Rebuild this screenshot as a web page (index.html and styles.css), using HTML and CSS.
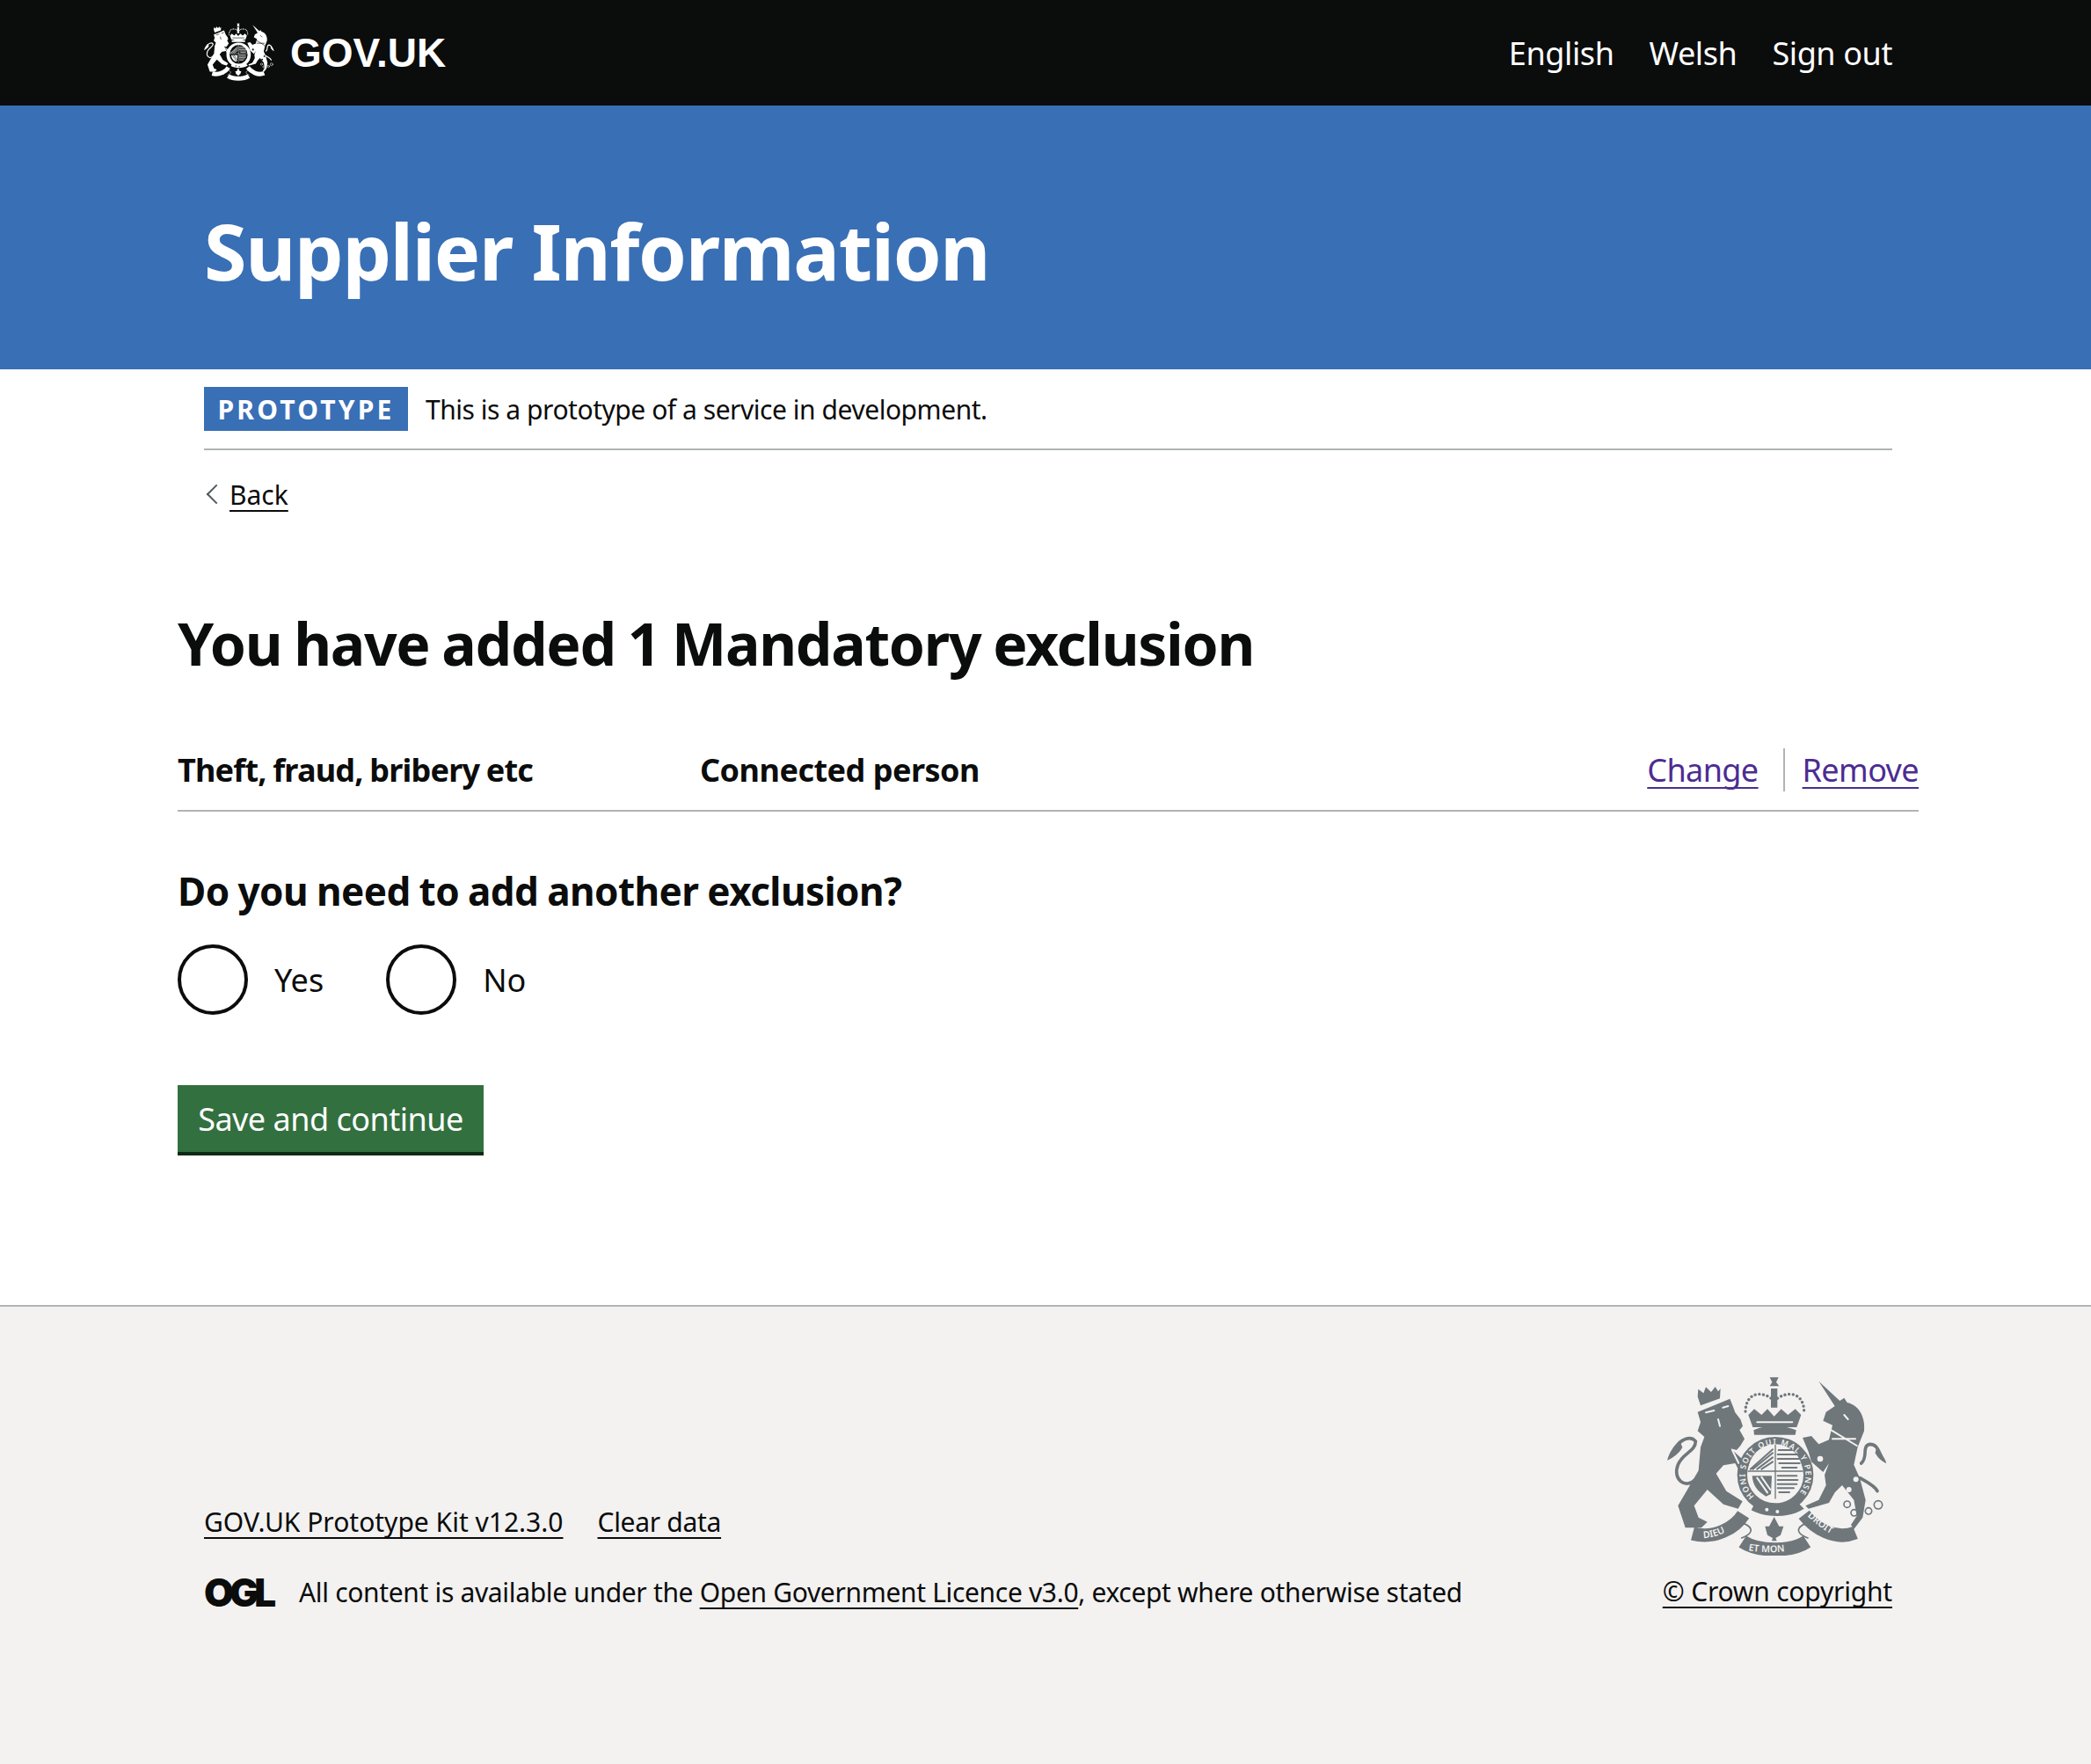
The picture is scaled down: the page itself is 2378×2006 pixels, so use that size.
FILE: index.html
```html
<!DOCTYPE html>
<html lang="en">
    <head>
        <meta charset="UTF-8">
        <meta name="viewport" content="width=device-width, initial-scale=1.0">
        <title>Supplier Information</title>
        <link rel="stylesheet" href="styles.css">
    </head>
<body>
    <svg class="defs" aria-hidden="true">
        <defs>
            <g id="arms">
                <!-- lion -->
                <path d="M212 170 L262 150 L322 125 L332 150 L340 172 L358 195 L366 218 L355 232 L372 262 L358 285 L345 300 L325 295 L385 350 L372 405 L340 345 L300 352 L275 380 L310 440 L365 475 L350 500 L300 485 L245 435 L200 490 L215 530 L245 545 L225 565 L170 565 L145 490 L180 430 L215 370 L222 290 L235 255 L212 235 L222 205 Z"/>
                <path class="arm-line" d="M205 400 C170 435 125 400 145 350 C160 310 205 305 205 270 C190 250 150 260 135 300"/>
                <path d="M150 268 C130 285 115 310 108 335 C130 325 150 310 160 290 Z"/>
                <path class="arm-gap" d="M240 172 L268 165 M298 155 L316 150 M282 195 L288 218 M330 300 L352 345"/>
                <path d="M212 118 L214 92 L232 106 L240 85 L258 102 L272 84 L282 100 L290 90 L288 124 L222 148 Z"/>
                <!-- unicorn -->
                <path d="M625 65 L697 132 L712 122 L722 138 C760 145 785 185 780 235 L758 290 L745 350 L765 395 L785 470 L775 530 L745 570 L735 555 L755 525 L745 470 L705 420 L680 445 L660 480 L590 500 L580 490 L625 470 L650 420 L645 385 L660 345 L640 375 L600 340 L590 305 L570 258 L600 252 L625 280 L660 265 L672 215 L640 200 L650 170 L680 150 Z"/>
                <path class="arm-line" d="M770 345 C795 325 770 285 800 280 C825 280 830 305 838 322"/>
                <path d="M822 290 C835 305 850 325 856 345 C840 340 825 325 818 310 Z"/>
                <path class="arm-line" d="M765 395 C790 410 815 420 825 440"/>
                <path class="arm-gap" d="M668 232 L755 285 M672 262 L750 262 M712 180 L725 195"/>
                <circle class="arm-dot" cx="728" cy="435" r="9"/>
                <circle class="arm-dot" cx="752" cy="400" r="9"/>
                <circle class="arm-dot" cx="630" cy="330" r="10"/>
                <circle class="arm-ring" cx="722" cy="485" r="11"/>
                <circle class="arm-ring" cx="746" cy="514" r="11"/>
                <circle class="arm-ring" cx="795" cy="508" r="11"/>
                <circle class="arm-ring" cx="828" cy="487" r="14"/>
                <!-- crown -->
                <path d="M385 180 L405 160 L430 180 L450 160 L473 185 L497 160 L520 180 L545 160 L565 180 L550 222 L400 222 Z"/>
                <path class="arm-gap" d="M415 205 L535 205"/>
                <path d="M403 232 C450 212 500 212 548 232 L545 248 L405 248 Z"/>
                <path class="arm-fine" d="M473 132 C430 92 375 105 375 170 M473 132 C520 92 575 105 575 170"/>
                <path d="M458 52 L488 52 L480 68 L490 82 L458 82 L466 68 Z M462 90 L484 90 L484 155 L462 155 Z"/>
                <!-- shield -->
                <circle class="arm-band" cx="477" cy="385" r="113"/>
                <circle class="arm-face" cx="477" cy="372" r="92"/>
                <path class="arm-cross" d="M385 372 L570 372 M477 280 L477 465"/>
                <path class="arm-hatch" d="M392 365 L468 298 M400 365 L468 310 M415 365 L468 325 M430 365 L468 340"/>
                <path class="arm-hatch" d="M488 300 L550 300 M485 315 L555 315 M485 330 L560 330 M490 345 L560 345 M500 360 L550 360"/>
                <path class="arm-hatch" d="M485 388 L550 388 M485 402 L553 402 M485 416 L550 416 M485 430 L540 430 M490 444 L525 444"/>
                <path d="M398 388 L465 388 L462 450 L445 458 C415 440 400 420 398 388 Z"/>
                <path class="arm-gap" d="M415 395 L450 445 M430 392 L460 435"/>
                <path d="M405 485 C440 510 510 515 555 480 L575 500 C520 535 440 530 395 505 Z"/>
                <circle class="arm-dot" cx="448" cy="503" r="6"/>
                <circle class="arm-dot" cx="484" cy="510" r="6"/>
                <!-- ribbon -->
                <path class="arm-ribbon" d="M195 585 C270 605 340 565 368 520"/>
                <path class="arm-ribbon" d="M365 612 C420 648 530 648 585 612"/>
                <path class="arm-ribbon" d="M575 520 C610 565 680 610 750 582"/>
                <path class="arm-curl" d="M350 545 C395 555 415 580 362 600 M600 545 C555 555 535 580 588 600"/>
                <path d="M473 528 L490 560 L505 560 L495 590 L478 600 L482 610 L465 610 L468 600 L450 590 L442 560 L456 560 Z"/>
            </g>
            <path id="arc-motto" d="M405 458 A103 103 0 1 1 553 454"/>
            <path id="rib-left" d="M232 600 C275 600 325 577 358 542"/>
            <path id="rib-mid" d="M385 642 C430 652 510 652 565 634"/>
            <path id="rib-right" d="M586 526 C620 556 665 592 718 608"/>
        </defs>
    </svg>

    <header class="top-bar">
        <div class="top-inner">
            <a class="logo" href="#"><svg class="logo-arms" viewBox="108 48 750 612"><use href="#arms"/></svg>GOV.UK</a>
            <nav class="top-nav">
                <a href="#">English</a>
                <a href="#">Welsh</a>
                <a href="#">Sign out</a>
            </nav>
        </div>
    </header>

    <div class="service-band">
        <div class="service-name">Supplier Information</div>
    </div>

    <div class="phase-banner">
        <strong class="phase-tag">PROTOTYPE</strong>
        <span class="phase-text">This is a prototype of a service in development.</span>
    </div>

    <a class="back-link" href="#">Back</a>

    <main class="main-wrap">
        <h1>You have added 1 Mandatory exclusion</h1>

        <div class="summary-row">
            <div class="summary-key">Theft, fraud, bribery etc</div>
            <div class="summary-value">Connected person</div>
            <div class="summary-actions">
                <a href="#">Change</a>
                <a href="#">Remove</a>
            </div>
        </div>

        <h2>Do you need to add another exclusion?</h2>

        <div class="radios">
            <label class="radio"><span class="radio-circle"></span>Yes</label>
            <label class="radio"><span class="radio-circle"></span>No</label>
        </div>

        <button class="save-button">Save and continue</button>
    </main>

    <footer class="footer">
        <div class="footer-inner">
            <div class="footer-left">
                <div class="footer-links">
                    <a href="#">GOV.UK Prototype Kit v12.3.0</a>
                    <a class="clear-link" href="#">Clear data</a>
                </div>
                <div class="licence">
                    <span class="ogl">OGL</span>
                    <span class="licence-text">All content is available under the <a href="#">Open Government Licence v3.0</a>, except where otherwise stated</span>
                </div>
            </div>
            <div class="footer-right">
                <svg class="footer-arms" viewBox="108 48 750 612">
                    <use href="#arms"/>
                    <text class="arm-text" textLength="470"><textPath href="#arc-motto">HONI SOIT QUI MAL Y PENSE</textPath></text>
                    <text class="arm-text ribbon-text"><textPath href="#rib-left">DIEU</textPath></text>
                    <text class="arm-text ribbon-text"><textPath href="#rib-mid">ET MON</textPath></text>
                    <text class="arm-text ribbon-text"><textPath href="#rib-right">DROIT</textPath></text>
                </svg>
                <a class="crown-link" href="#">© Crown copyright</a>
            </div>
        </div>
    </footer>
</body>
</html>
```

FILE: styles.css
```css
html, body {
    height: 100%;
}

body {
    font-family: 'Noto Sans', sans-serif;
    margin: 0;
    background-color: #fff;
    color: #0b0c0c;
    font-size: 30px;
    display: flex;
    flex-direction: column;
}

a {
    color: inherit;
    text-decoration-thickness: 2px;
    text-underline-offset: 6px;
    text-decoration-skip-ink: none;
}

h1, h2 {
    margin: 0;
}

.defs {
    position: absolute;
    width: 0;
    height: 0;
}

/* coat of arms parts */
.arm-line, .arm-fine, .arm-ring, .arm-hatch, .arm-gap, .arm-cross, .arm-curl {
    fill: none;
    stroke-linecap: round;
}

.arm-line {
    stroke: currentColor;
    stroke-width: 11px;
}

.arm-fine {
    stroke: currentColor;
    stroke-width: 10px;
    stroke-dasharray: 0.1 14;
}

.arm-hatch {
    stroke: currentColor;
    stroke-width: 6px;
}

.arm-cross {
    stroke: currentColor;
    stroke-width: 4px;
}

.arm-curl {
    stroke: currentColor;
    stroke-width: 5px;
}

.arm-ring {
    stroke: currentColor;
    stroke-width: 5px;
}

.arm-gap {
    stroke: var(--arm-bg);
    stroke-width: 6px;
}

.arm-dot {
    fill: var(--arm-bg);
}

.arm-band {
    fill: var(--arm-bg);
    stroke: currentColor;
    stroke-width: 34px;
}

.arm-face {
    fill: var(--arm-bg);
}

.arm-ribbon {
    fill: none;
    stroke: currentColor;
    stroke-width: 46px;
}

.arm-text {
    fill: var(--arm-bg);
    font-family: 'Noto Sans', sans-serif;
    font-size: 27px;
    font-weight: 600;
}

.ribbon-text {
    font-size: 32px;
}

/* header */
.top-bar {
    background-color: #0b0c0c;
    color: #fff;
    height: 120px;
}

.top-inner {
    display: flex;
    justify-content: space-between;
    align-items: center;
    height: 120px;
    width: 1920px;
    margin-left: 232px;
}

.logo {
    display: flex;
    align-items: center;
    gap: 18px;
    color: #fff;
    text-decoration: none;
    font-family: 'Liberation Sans', sans-serif;
    font-weight: bold;
    font-size: 46px;
    letter-spacing: 0;
    fill: #fff;
    --arm-bg: #0b0c0c;
}

.logo-arms {
    width: 80px;
    height: 66px;
    margin-bottom: 2px;
}

.top-nav {
    display: flex;
    gap: 40px;
    font-size: 36px;
    letter-spacing: -0.4px;
}

.top-nav a {
    color: #fff;
    text-decoration: none;
}

.service-band {
    background-color: #396fb5;
    height: 300px;
    box-sizing: border-box;
    padding-top: 30px;
    display: flex;
    align-items: center;
}

.service-name {
    margin-left: 232px;
    color: #fff;
    font-size: 88px;
    font-weight: 700;
    letter-spacing: -1.3px;
}

/* phase banner */
.phase-banner {
    width: 1920px;
    margin-left: 232px;
    padding: 20px 0;
    display: flex;
    align-items: center;
    gap: 20px;
    border-bottom: 2px solid #b1b4b6;
}

.phase-tag {
    background-color: #396fb5;
    color: #fff;
    width: 232px;
    height: 50px;
    display: flex;
    align-items: center;
    justify-content: center;
    font-weight: 700;
    letter-spacing: 3.2px;
}

.phase-text {
    letter-spacing: -0.46px;
}

.back-link {
    align-self: flex-start;
    margin: 30px 0 0 261px;
    position: relative;
}

.back-link::before {
    content: "";
    position: absolute;
    left: -23px;
    top: 12px;
    width: 14px;
    height: 14px;
    border-left: 2px solid #505a5f;
    border-bottom: 2px solid #505a5f;
    transform: rotate(45deg);
}

/* main */
.main-wrap {
    width: 1980px;
    margin-left: 202px;
    padding-top: 106px;
    padding-bottom: 174px;
}

h1 {
    font-size: 66px;
    font-weight: 700;
    letter-spacing: -1.3px;
    word-spacing: -2px;
    line-height: 84px;
    margin-bottom: 78px;
}

.summary-row {
    display: flex;
    align-items: center;
    border-bottom: 2px solid #b1b4b6;
    padding-bottom: 21px;
    margin-bottom: 60px;
    font-size: 36px;
}

.summary-key {
    width: 594px;
    font-weight: 700;
    letter-spacing: -0.8px;
    word-spacing: -1px;
}

.summary-value {
    font-weight: 700;
    letter-spacing: -0.5px;
}

.summary-actions {
    margin-left: auto;
    display: flex;
    letter-spacing: -0.6px;
}

.summary-actions a {
    color: #4c2c92;
    padding-left: 20px;
}

.summary-actions a:first-child {
    padding-left: 0;
    padding-right: 28px;
    border-right: 2px solid #b1b4b6;
}

h2 {
    font-size: 44px;
    font-weight: 700;
    letter-spacing: -0.55px;
    word-spacing: -1px;
    line-height: 60px;
}

.radios {
    display: flex;
    gap: 71px;
    margin-top: 31px;
}

.radio {
    display: flex;
    align-items: center;
    gap: 30px;
    font-size: 36px;
}

.radio-circle {
    width: 80px;
    height: 80px;
    box-sizing: border-box;
    border: 4px solid #0b0c0c;
    border-radius: 50%;
}

.save-button {
    display: block;
    margin-top: 80px;
    width: 348px;
    height: 76px;
    font-family: inherit;
    font-size: 36px;
    letter-spacing: -0.5px;
    color: #fff;
    background-color: #33703f;
    border: none;
    border-radius: 0;
    box-shadow: 0 4px 0 #0f2a14;
    cursor: pointer;
}

/* footer */
.footer {
    flex: 1;
    background-color: #f3f2f1;
    border-top: 2px solid #b1b4b6;
}

.footer-inner {
    width: 1920px;
    margin-left: 232px;
    display: flex;
    justify-content: space-between;
    align-items: flex-end;
    padding-top: 79px;
}

.footer-left {
    margin-bottom: -1px;
}

.footer-links {
    display: flex;
    gap: 39px;
    margin-bottom: 39px;
}

.clear-link {
    letter-spacing: -0.3px;
}

.licence {
    display: flex;
    align-items: center;
    gap: 26px;
}

.licence-text {
    letter-spacing: -0.33px;
}

.ogl {
    font-family: 'Inter', sans-serif;
    font-weight: 900;
    font-size: 44px;
    letter-spacing: -5px;
    line-height: 40px;
    width: 82px;
}

.footer-right {
    display: flex;
    flex-direction: column;
    align-items: center;
    gap: 20px;
    fill: #6f777b;
    color: #0b0c0c;
    --arm-bg: #f3f2f1;
}

.crown-link {
    letter-spacing: -0.2px;
}

.footer-arms {
    width: 250px;
    height: 204px;
    color: #6f777b;
}
```
